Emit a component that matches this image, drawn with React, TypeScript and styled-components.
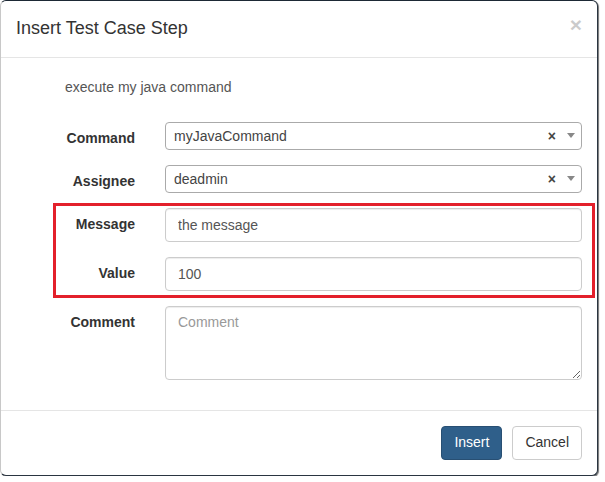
import React from "react";
import styled, { createGlobalStyle } from "styled-components";

const Global = createGlobalStyle`
  html, body { margin: 0; padding: 0; background: #ffffff; }
  body { font-family: "Liberation Sans", Arial, sans-serif; font-size: 14px; line-height: 1.42857; color: #333; }
  * { box-sizing: border-box; }
`;

const Modal = styled.div`
  width: 598px;
  background: #fff;
  border: 1px solid #2a3541;
  border-top-color: #1d2935;
  border-left-color: #c8c8c8;
  border-radius: 6px;
  box-shadow: 1px 1px 1px rgba(0, 0, 0, 0.55);
  position: relative;
`;

const Header = styled.div`
  padding: 15px;
  border-bottom: 1px solid #e5e5e5;
  display: flex;
  align-items: flex-start;
  justify-content: space-between;
`;

const Title = styled.h4`
  margin: 0;
  font-size: 18px;
  font-weight: 500;
  line-height: 1.42857;
  color: #333;
`;

const Close = styled.button`
  border: 0;
  background: transparent;
  padding: 0;
  margin-top: -2px;
  font-family: "Liberation Sans", Arial, sans-serif;
  font-size: 21px;
  font-weight: 700;
  line-height: 1;
  color: #000;
  opacity: 0.2;
  cursor: pointer;
`;

const Body = styled.div`
  padding: 15px;
`;

const Form = styled.div`
  margin: 0 -15px;
  padding-bottom: 15px;
  display: flex;
  flex-direction: column;
  gap: 15px;
`;

const Description = styled.div`
  padding: 5px 0 0 64px;
  margin-bottom: 9px;
  color: #555;
`;

const Row = styled.div`
  display: grid;
  grid-template-columns: 149px 1fr;
`;

const Label = styled.label`
  padding: 7px 15px 0 15px;
  text-align: right;
  font-weight: 700;
  color: #333;
`;

const Field = styled.div`
  padding: 0 15px;
`;

const Select = styled.div`
  height: 28px;
  border: 1px solid #aaa;
  border-radius: 4px;
  display: flex;
  align-items: center;
  padding-left: 8px;
  color: #444;
  line-height: 26px;
`;

const SelectText = styled.span`
  flex: 1;
`;

const Clear = styled.span`
  font-weight: 700;
  color: #444;
  margin-right: 5px;
  font-size: 14px;
`;

const Arrow = styled.span`
  width: 20px;
  display: flex;
  justify-content: center;
  &::after {
    content: "";
    border-style: solid;
    border-width: 5px 4px 0 4px;
    border-color: #888 transparent transparent transparent;
  }
`;

const Input = styled.input`
  display: block;
  width: 100%;
  height: 34px;
  padding: 6px 12px;
  font-family: "Liberation Sans", Arial, sans-serif;
  font-size: 14px;
  line-height: 1.42857;
  color: #555;
  background: #fff;
  border: 1px solid #ccc;
  border-radius: 4px;
  box-shadow: inset 0 1px 1px rgba(0, 0, 0, 0.075);
  outline: none;
`;

const TextArea = styled.textarea`
  display: block;
  width: 100%;
  height: 74px;
  padding: 6px 12px;
  font-family: "Liberation Sans", Arial, sans-serif;
  font-size: 14px;
  line-height: 1.42857;
  color: #555;
  border: 1px solid #ccc;
  border-radius: 4px;
  box-shadow: inset 0 1px 1px rgba(0, 0, 0, 0.075);
  outline: none;
  &::placeholder { color: #999; }
`;

const Highlight = styled.div`
  position: relative;
  display: flex;
  flex-direction: column;
  gap: 15px;
`;

const RedFrame = styled.div`
  position: absolute;
  left: 52px;
  right: 2px;
  top: -5px;
  bottom: -7px;
  border: 3px solid #e3202b;
  pointer-events: none;
`;

const Footer = styled.div`
  padding: 15px;
  border-top: 1px solid #e5e5e5;
  display: flex;
  justify-content: flex-end;
  gap: 10px;
`;

const Button = styled.button<{ $primary?: boolean }>`
  height: 34px;
  padding: 6px 12px;
  font-family: "Liberation Sans", Arial, sans-serif;
  font-size: 14px;
  line-height: 1.42857;
  border-radius: 4px;
  border: 1px solid ${(p) => (p.$primary ? "#284f73" : "#ccc")};
  background: ${(p) => (p.$primary ? "#2f5f8a" : "#fff")};
  color: ${(p) => (p.$primary ? "#fff" : "#333")};
  cursor: pointer;
`;

function SelectBox({ value }: { value: string }) {
  return (
    <Select>
      <SelectText>{value}</SelectText>
      <Clear>×</Clear>
      <Arrow />
    </Select>
  );
}

export default function App() {
  return (
    <>
      <Global />
      <Modal>
        <Header>
          <Title>Insert Test Case Step</Title>
          <Close>×</Close>
        </Header>
        <Body>
          <Form>
            <Description>execute my java command</Description>
            <Row>
              <Label>Command</Label>
              <Field>
                <SelectBox value="myJavaCommand" />
              </Field>
            </Row>
            <Row>
              <Label>Assignee</Label>
              <Field>
                <SelectBox value="deadmin" />
              </Field>
            </Row>
            <Highlight>
              <Row>
                <Label>Message</Label>
                <Field>
                  <Input defaultValue="the message" />
                </Field>
              </Row>
              <Row>
                <Label>Value</Label>
                <Field>
                  <Input defaultValue="100" />
                </Field>
              </Row>
              <RedFrame />
            </Highlight>
            <Row>
              <Label>Comment</Label>
              <Field>
                <TextArea placeholder="Comment" />
              </Field>
            </Row>
          </Form>
        </Body>
        <Footer>
          <Button $primary>Insert</Button>
          <Button>Cancel</Button>
        </Footer>
      </Modal>
    </>
  );
}
